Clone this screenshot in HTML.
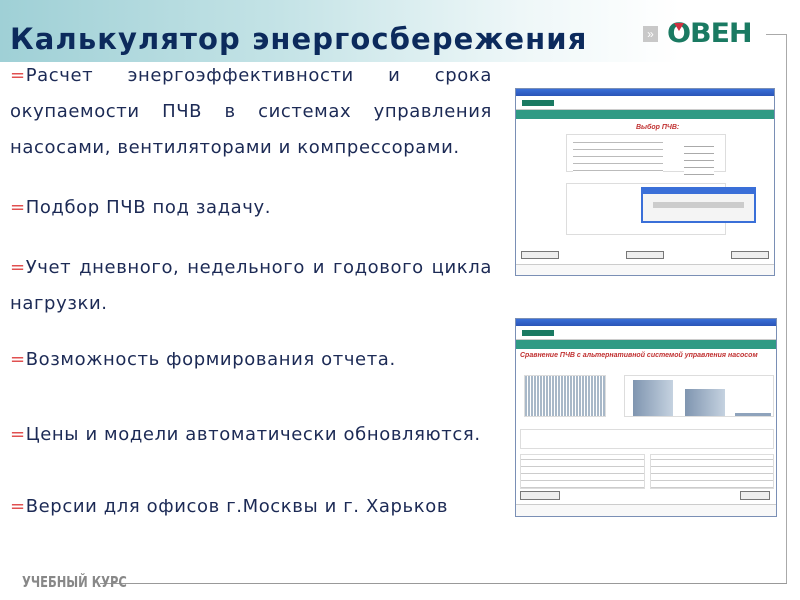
<!DOCTYPE html>
<html><head><meta charset="utf-8"><style>
*{margin:0;padding:0;box-sizing:border-box}
body{width:800px;height:600px;position:relative;overflow:hidden;background:#fff;font-family:"Liberation Sans","DejaVu Sans",sans-serif}
.bg{position:absolute;left:0;top:0;width:800px;height:62px;background:linear-gradient(90deg,#9fd0d6 0%,#c4e3e6 35%,#eef7f8 65%,#fff 85%)}
h1{position:absolute;left:10px;top:22px;font-size:29px;font-weight:bold;color:#0c2a5c;letter-spacing:1.1px;font-family:"DejaVu Sans",sans-serif;white-space:nowrap}
.t{position:absolute;left:10px;width:482px;font-size:18px;color:#1c2a55;line-height:36px;text-align:justify;text-align-last:left;font-family:"DejaVu Sans",sans-serif;letter-spacing:0.6px}
.t span{color:#e05050}
.shot{position:absolute;border:1px solid #7a8fb5;background:#fff;overflow:hidden;font-size:5px;color:#444}
.tb{height:7px;background:linear-gradient(#3a6fd8,#2a55b8)}
.hdr{height:14px;background:#fff;border-bottom:1px solid #ccc;position:relative}
.strip{height:9px;background:#2f9a84}
.frame{position:absolute;border-color:#aaa;border-style:solid}
</style></head><body>
<div class="bg"></div>
<h1>Калькулятор энергосбережения</h1>
<div style="position:absolute;left:643px;top:26px;width:15px;height:16px;background:#c8c8c8;color:#fff;font-size:12px;line-height:16px;text-align:center">»</div>
<div style="position:absolute;left:667px;top:21px;font-size:27px;font-weight:900;color:#1a7a62;font-family:'DejaVu Sans',sans-serif;letter-spacing:-1px;line-height:26px;transform:scaleX(1.05);transform-origin:left">OBEH</div>
<div style="position:absolute;left:674px;top:23px;width:0;height:0;border-left:5px solid transparent;border-right:5px solid transparent;border-top:8px solid #d03040"></div>
<div class="frame" style="left:766px;top:34px;width:21px;height:550px;border-width:1px 1px 0 0"></div>
<div class="frame" style="left:100px;top:583px;width:687px;height:2px;border-width:1px 0 0 0;border-color:#999"></div>
<div style="position:absolute;left:22px;top:573px;font-size:15px;font-weight:bold;color:#888;font-family:'DejaVu Sans Condensed','DejaVu Sans',sans-serif;transform:scaleX(0.85);transform-origin:left">УЧЕБНЫЙ КУРС</div>

<div class="t" style="top:58px"><span>=</span>Расчет энергоэффективности и срока окупаемости ПЧВ в системах управления насосами, вентиляторами и компрессорами.</div>
<div class="t" style="top:190px"><span>=</span>Подбор ПЧВ под задачу.</div>
<div class="t" style="top:250px"><span>=</span>Учет дневного, недельного и годового цикла нагрузки.</div>
<div class="t" style="top:342px"><span>=</span>Возможность формирования отчета.</div>
<div class="t" style="top:417px"><span>=</span>Цены и модели автоматически обновляются.</div>
<div class="t" style="top:489px"><span>=</span>Версии для офисов г.Москвы и г. Харьков</div>

<div class="shot" style="left:515px;top:88px;width:260px;height:188px">
<div class="tb"></div>
<div class="hdr"><div style="position:absolute;left:6px;top:4px;width:32px;height:6px;background:#1a7a62"></div></div>
<div class="strip"></div>
<div style="position:absolute;left:120px;top:35px;color:#c03030;font-size:7px;font-weight:bold;font-style:italic">Выбор ПЧВ:</div>
<div style="position:absolute;left:50px;top:45px;width:160px;height:38px;border:1px solid #ddd"></div>
<div style="position:absolute;left:168px;top:52px;width:30px;height:34px;background:repeating-linear-gradient(#fff 0,#fff 5px,#aaa 5px,#aaa 6px,#fff 6px,#fff 7px)"></div>
<div style="position:absolute;left:57px;top:50px;width:90px;height:38px;background:repeating-linear-gradient(#fff 0,#fff 3px,#bbb 3px,#bbb 4px,#fff 4px,#fff 7px)"></div>
<div style="position:absolute;left:50px;top:94px;width:160px;height:52px;border:1px solid #ddd"></div>
<div style="position:absolute;left:125px;top:98px;width:115px;height:36px;border:2px solid #3a6fd8;background:#f4f4f4"><div style="height:5px;background:#3a6fd8"></div><div style="margin:8px 10px 0;height:6px;background:#ccc"></div></div>
<div style="position:absolute;left:5px;top:162px;width:38px;height:8px;border:1px solid #777;background:#eee"></div>
<div style="position:absolute;left:110px;top:162px;width:38px;height:8px;border:1px solid #777;background:#eee"></div>
<div style="position:absolute;right:5px;top:162px;width:38px;height:8px;border:1px solid #777;background:#eee"></div>
<div style="position:absolute;left:0;top:175px;width:100%;height:13px;border-top:1px solid #ccc;background:#f8f8f8"></div>
</div>

<div class="shot" style="left:515px;top:318px;width:262px;height:199px">
<div class="tb"></div>
<div class="hdr"><div style="position:absolute;left:6px;top:4px;width:32px;height:6px;background:#1a7a62"></div></div>
<div class="strip"></div>
<div style="position:absolute;left:4px;top:33px;color:#c03030;font-size:7px;font-weight:bold;font-style:italic">Сравнение ПЧВ с альтернативной системой управления насосом</div>
<div style="position:absolute;left:8px;top:56px;width:82px;height:42px;border:1px solid #ddd;background:repeating-linear-gradient(90deg,#a8b8c8 0,#a8b8c8 2px,#fff 2px,#fff 3px)"></div>
<div style="position:absolute;left:108px;top:56px;width:150px;height:42px;border:1px solid #ddd;background:#fff">
<div style="position:absolute;left:8px;bottom:0;width:40px;height:36px;background:linear-gradient(90deg,#7f95b0,#c5d2e0)"></div>
<div style="position:absolute;left:60px;bottom:0;width:40px;height:27px;background:linear-gradient(90deg,#7f95b0,#c5d2e0)"></div>
<div style="position:absolute;left:110px;bottom:0;width:36px;height:3px;background:#8fa3bc"></div></div>
<div style="position:absolute;left:4px;top:110px;width:254px;height:20px;border:1px solid #ddd"></div>
<div style="position:absolute;left:4px;top:135px;width:125px;height:35px;border:1px solid #ddd;background:repeating-linear-gradient(#fff 0,#fff 4px,#ccc 4px,#ccc 5px,#fff 5px,#fff 7px)"></div>
<div style="position:absolute;left:134px;top:135px;width:124px;height:35px;border:1px solid #ddd;background:repeating-linear-gradient(#fff 0,#fff 4px,#ccc 4px,#ccc 5px,#fff 5px,#fff 7px)"></div>
<div style="position:absolute;left:4px;top:172px;width:40px;height:9px;border:1px solid #777;background:#eee"></div>
<div style="position:absolute;right:6px;top:172px;width:30px;height:9px;border:1px solid #777;background:#eee"></div>
<div style="position:absolute;left:0;top:185px;width:100%;height:14px;border-top:1px solid #ccc;background:#f8f8f8"></div>
</div>
</body></html>
